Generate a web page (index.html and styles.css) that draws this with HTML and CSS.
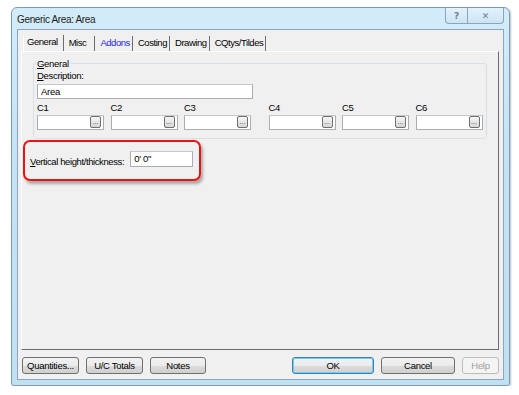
FILE: index.html
```html
<!DOCTYPE html>
<html lang="en">
<head>
<meta charset="UTF-8">
<title>Generic Area: Area</title>
<link rel="stylesheet" href="styles.css">
</head>
<body>

<div class="window">
    <div class="titlebar">
        <span class="title">Generic Area: Area</span>
        <div class="caption-buttons">
            <span class="cap-btn help-btn">?</span>
            <span class="cap-btn close-btn">&#x2715;</span>
        </div>
    </div>

    <div class="client">
        <div class="tabs">
            <span class="tab active">General</span>
            <span class="tab tab-misc">Misc</span>
            <span class="tab link">Addons</span>
            <span class="tab">Costing</span>
            <span class="tab">Drawing</span>
            <span class="tab">CQtys/Tildes</span>
        </div>

        <div class="panel">
            <fieldset class="group">
                <legend><u>G</u>eneral</legend>
                <label class="field-label"><u>D</u>escription:</label>
                <div class="textbox desc">Area</div>

                <div class="codes">
                    <div class="code"><span>C1</span><div class="textbox picker"><span class="dots">...</span></div></div>
                    <div class="code"><span>C2</span><div class="textbox picker"><span class="dots">...</span></div></div>
                    <div class="code"><span>C3</span><div class="textbox picker"><span class="dots">...</span></div></div>
                    <div class="code gap"><span>C4</span><div class="textbox picker"><span class="dots">...</span></div></div>
                    <div class="code"><span>C5</span><div class="textbox picker"><span class="dots">...</span></div></div>
                    <div class="code"><span>C6</span><div class="textbox picker"><span class="dots">...</span></div></div>
                </div>
            </fieldset>

            <div class="highlight">
                <label><u>V</u>ertical height/thickness:</label>
                <div class="textbox height">0' 0"</div>
            </div>
        </div>

        <div class="footer">
            <button class="btn">Quantities...</button>
            <button class="btn">U/C Totals</button>
            <button class="btn wide">Notes</button>
            <span class="spacer"></span>
            <button class="btn ok">OK</button>
            <button class="btn cancel">Cancel</button>
            <button class="btn help" disabled>Help</button>
        </div>
    </div>
</div>

</body>
</html>
```

FILE: styles.css
```css
body {
    margin: 0;
    background-color: #ffffff;
    font-family: "Liberation Sans", Arial, sans-serif;
    font-size: 9.5px;
    letter-spacing: -0.3px;
    color: #000;
}
.window {
    margin: 7px 0 0 11px;
    width: 497px;
    height: 377px;
    border: 1px solid #7e99b4;
    border-radius: 6px 6px 3px 3px;
    background: linear-gradient(to bottom, #d3ecfa 0%, #c4e3f5 40%, #bfe1f2 100%);
    box-shadow: 1px 1px 2px rgba(0, 0, 0, 0.25);
    display: flex;
    flex-direction: column;
}
.titlebar {
    height: 21px;
    display: flex;
    align-items: flex-start;
}
.title {
    margin: 6px 0 0 5px;
    font-size: 10px;
    letter-spacing: -0.35px;
    color: #1e1e1e;
}
.caption-buttons {
    margin-left: auto;
    margin-right: 5px;
    display: flex;
    border: 1px solid #8ca3b8;
    border-top: none;
    border-radius: 0 0 4px 4px;
    background: linear-gradient(to bottom, #e3f2fb, #cbe5f4);
    height: 15px;
}
.cap-btn {
    display: flex;
    align-items: center;
    justify-content: center;
    font-family: "DejaVu Sans", sans-serif;
    font-size: 9px;
    letter-spacing: 0;
    color: #6f8090;
}
.help-btn {
    width: 21px;
    border-right: 1px solid #8ca3b8;
    font-weight: bold;
}
.close-btn {
    width: 35px;
    font-weight: bold;
}
.client {
    flex: 1;
    margin: 0 5px 5px 5px;
    background-color: #f0f0f0;
    border: 1px solid #8ea6bd;
    padding: 5px 4px 0 3px;
    display: flex;
    flex-direction: column;
}
.tabs {
    display: flex;
    height: 16px;
    align-items: flex-end;
    padding-left: 2px;
    letter-spacing: -0.45px;
}
.tab {
    padding: 0 2px 2px 4px;
    border-right: 1px solid #6d6d6d;
    line-height: 13px;
    margin-right: 1px;
}
.tab.active {
    border-left: 1px solid #ffffff;
    padding-left: 3px;
    padding-right: 5px;
    padding-bottom: 3px;
}
.tab-misc {
    padding-right: 8px;
}
.tab.link {
    color: #1f1fe6;
}
.panel {
    height: 299px;
    border: 1px solid #ffffff;
    border-right-color: #6d6d6d;
    border-bottom-color: #6d6d6d;
    box-sizing: border-box;
    padding: 6px 11px 0 11px;
}
.group {
    margin: 0;
    min-width: 0;
    border: 1px solid #d8e0e6;
    border-radius: 3px;
    padding: 0 2px 8px 3px;
}
.group legend {
    padding: 0 1px;
    margin-left: -1px;
    line-height: 11px;
}
.field-label {
    display: block;
    margin-top: 1px;
    line-height: 12px;
}
.textbox {
    background: #ffffff;
    border: 1px solid #abadb3;
    border-top-color: #c5c8ce;
    height: 13px;
    line-height: 13px;
    padding: 0 3px;
    box-sizing: content-box;
}
.desc {
    width: 208px;
    margin-top: 2px;
}
.codes {
    display: flex;
    margin-top: 4px;
}
.code {
    display: flex;
    flex-direction: column;
    margin-right: 6.5px;
}
.code.gap {
    margin-left: 11px;
}
.code span:first-child {
    line-height: 10px;
    margin-bottom: 2px;
}
.picker {
    width: 60px;
    display: flex;
    justify-content: flex-end;
    align-items: center;
    padding-right: 2px;
}
.dots {
    width: 9px;
    height: 10px;
    border: 1px solid #6f6f6f;
    border-radius: 2px;
    background: linear-gradient(to bottom, #f6f6f6, #d6d6d6);
    font-size: 7px;
    letter-spacing: 0;
    line-height: 9px;
    text-align: center;
    color: #444;
    overflow: hidden;
}
.highlight {
    margin: 1px 0 0 -10px;
    width: 178px;
    height: 41px;
    box-sizing: border-box;
    border: 2px solid #ee1111;
    border-radius: 7px;
    box-shadow: 2px 3px 3px rgba(0, 0, 0, 0.3);
    display: flex;
    align-items: center;
    padding-left: 5px;
}
.highlight label {
    white-space: nowrap;
    letter-spacing: -0.4px;
    margin-right: 6px;
    margin-top: 2px;
}
.height {
    width: 55px;
    height: 14px;
    margin-top: -3px;
}
.footer {
    display: flex;
    padding: 7px 0 0 1px;
}
.btn {
    font-family: "Liberation Sans", Arial, sans-serif;
    font-size: 9.5px;
    letter-spacing: -0.3px;
    height: 17px;
    padding: 0;
    border: 1px solid #707070;
    border-radius: 3px;
    background: linear-gradient(to bottom, #f2f2f2 0%, #ebebeb 50%, #dddddd 51%, #cfcfcf 100%);
    color: #000;
    width: 57px;
    margin-right: 7px;
}
.btn.wide {
    width: 56px;
}
.spacer {
    flex: 1;
}
.btn.ok {
    width: 82px;
    border-color: #3c7fb1;
    box-shadow: inset 0 0 0 1px #6ad1f5;
}
.btn.cancel {
    width: 74px;
}
.btn.help {
    width: 37px;
    margin-right: 0;
    color: #a0a0a0;
    border-color: #bcbcbc;
    background: #f4f4f4;
}
```
